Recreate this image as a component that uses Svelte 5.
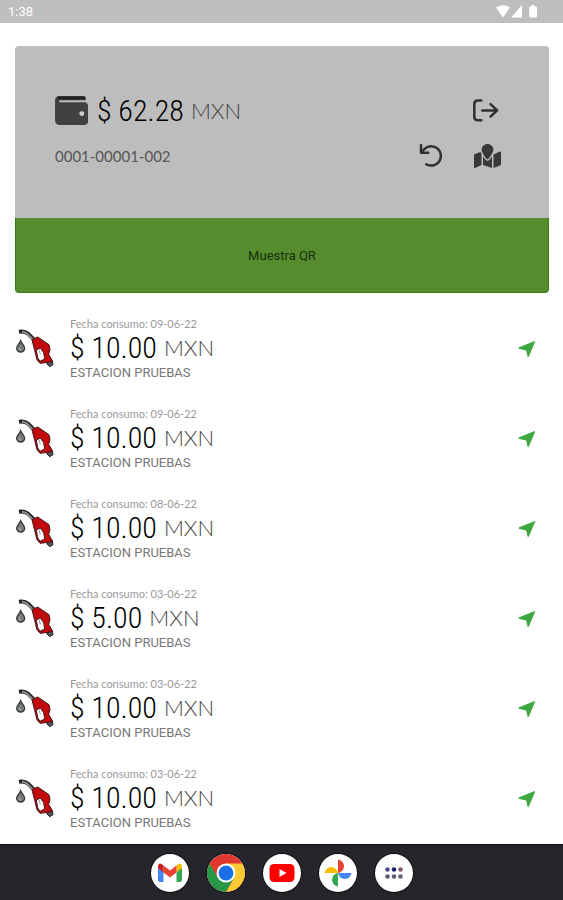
<script>
  const movements = [
    { date: '09-06-22', amount: '10.00' },
    { date: '09-06-22', amount: '10.00' },
    { date: '08-06-22', amount: '10.00' },
    { date: '03-06-22', amount: '5.00' },
    { date: '03-06-22', amount: '10.00' },
    { date: '03-06-22', amount: '10.00' }
  ];
</script>

<div class="screen">
  <header class="status">
    <span>1:38</span>
    <svg width="42" height="14" viewBox="0 0 42 14" fill="#fff" aria-hidden="true">
      <path d="M0 2.6Q7 -2.2 14 2.6L7 12.4Z" />
      <path d="M26 0V12.4H15Z" />
      <path d="M34 1.4h1.6V0h3v1.4h1.6a.8.8 0 0 1 .8.8v9.4a.8.8 0 0 1-.8.8h-6.2a.8.8 0 0 1-.8-.8V2.2a.8.8 0 0 1 .8-.8Z" />
    </svg>
  </header>

  <main>
    <section class="card">
      <div class="summary">
        <div class="line">
          <svg class="wallet" width="33" height="29" viewBox="0 32 512 448" aria-hidden="true">
            <path fill="#414141" d="M461.2 128H80c-8.84 0-16-7.16-16-16s7.16-16 16-16h384c8.84 0 16-7.16 16-16 0-26.51-21.49-48-48-48H64C28.65 32 0 60.65 0 96v320c0 35.35 28.65 64 64 64h397.2c28.02 0 50.8-21.53 50.8-48V176c0-26.47-22.78-48-50.8-48zM416 336c-17.67 0-32-14.33-32-32s14.33-32 32-32 32 14.33 32 32-14.33 32-32 32z" />
            <path fill="none" stroke="#222" stroke-width="44" stroke-linecap="round" d="M64 62H452" />
            <circle cx="416" cy="304" r="38" fill="#d0d0d0" />
          </svg>
          <p class="money">$ 62.28 <span>MXN</span></p>
          <button class="tool" aria-label="Salir">
            <svg width="30" height="24" viewBox="0 0 30 24" fill="none" stroke="#303030" stroke-width="2.5" stroke-linecap="round" stroke-linejoin="round">
              <path d="M8.3 1.6H4.8Q1.3 1.6 1.3 5.4V17.4Q1.3 21.2 4.8 21.2H8.3M9.3 11.4H24M17.5 5.2L24.2 11.4L17.5 17.6" />
            </svg>
          </button>
        </div>
        <div class="line">
          <p class="account">0001-00001-002</p>
          <button class="tool" aria-label="Actualizar">
            <svg width="24" height="24" viewBox="0 0 24 24" fill="none" stroke="#303030" stroke-width="2.5" stroke-linecap="round" stroke-linejoin="round">
              <path d="M2 1.2V8.8H9.2" />
              <path d="M2.8 8L5.6 4.8A9.7 9.7 0 1 1 7.2 20.2" />
            </svg>
          </button>
          <button class="tool" aria-label="Mapa">
            <svg width="27" height="24" viewBox="0 0 576 512">
              <path fill="#383838" d="M288 0c-69.59 0-126 56.41-126 126 0 56.26 82.35 158.8 113.9 196.02 6.39 7.54 17.82 7.54 24.2 0C331.65 284.8 414 182.26 414 126 414 56.41 357.59 0 288 0zM20.12 215.95A32.006 32.006 0 0 0 0 245.66v250.32c0 11.32 11.43 19.06 21.94 14.86L160 448V214.92c-8.84-15.98-16.07-31.54-21.25-46.42L20.12 215.95zM288 359.67c-14.07 0-27.38-6.18-36.51-16.96-19.66-23.2-40.57-49.62-59.49-76.72v182l192 64V266c-18.92 27.09-39.82 53.52-59.49 76.72-9.13 10.77-22.44 16.95-36.51 16.95zm266.06-198.51L416 224v288l139.88-55.95A31.996 31.996 0 0 0 576 426.34V176.02c0-11.32-11.43-19.06-21.94-14.86z" />
            </svg>
          </button>
        </div>
      </div>
      <button class="qr">Muestra QR</button>
    </section>

    <ul>
      {#each movements as m}
        <li>
          <svg class="pump" width="40" height="42" viewBox="45 65 120 126" aria-hidden="true">
            <path d="M57 76Q74 73 84 82L101 99" fill="none" stroke="#222" stroke-width="12" />
            <path d="M66 76Q76 76 82 83L99 100" fill="none" stroke="#8d9292" stroke-width="6" />
            <path d="M62 103C66 113 74 117 74 126A12 11 0 0 1 50 126C50 117 58 113 62 103Z" fill="#777b7b" stroke="#383838" stroke-width="4" />
            <path d="M57 125Q58 131 63 132" fill="none" stroke="#c4c7c7" stroke-width="3" />
            <path d="M141 161L157 164L159 175L149 181L141 173Z" fill="#555" stroke="#222" stroke-width="3" />
            <path d="M96 100L113 92L147 115L150 130L146 144L158 165L144 168L120 171L111 160L104 132Z" fill="#c00a0c" stroke="#471315" stroke-width="3" stroke-linejoin="round" />
            <path d="M109 131L121 125L131 139L134 158L120 165L113 154Z" fill="#fff" stroke="#45191a" stroke-width="3" stroke-linejoin="round" />
            <path d="M117 130L121 144" stroke="#999" stroke-width="3" />
          </svg>
          <div class="detail">
            <p class="date">Fecha consumo: {m.date}</p>
            <p class="money">$ {m.amount} <span>MXN</span></p>
            <p class="station">ESTACION PRUEBAS</p>
          </div>
          <button class="go" aria-label="Ver ubicación">
            <svg width="18" height="18" viewBox="0 0 18 18">
              <path fill="#3ca83f" d="M16.2 1.2Q17.4.8 17 2L11 16.2Q10.3 17.6 9.4 16.3L8.6 12Q8.5 10.5 7.2 10.2L1.4 9Q-.2 8.2 1.2 7.2Z" />
            </svg>
          </button>
        </li>
      {/each}
    </ul>
  </main>

  <nav>
    <a href="#gmail" aria-label="Gmail">
      <svg viewBox="0 0 38 38">
        <path d="M7 12V26Q7 28 9 28H12.5V17Z" fill="#4285f4" />
        <path d="M25.5 17V28H29Q31 28 31 26V12Z" fill="#34a853" />
        <path d="M25.5 11.5V18.5L31 14V12Q30.5 8.5 27.5 10Z" fill="#fbbc04" />
        <path d="M12.5 18.5V11.5L19 16.5L25.5 11.5V18.5L19 23.5Z" fill="#ea4335" />
        <path d="M7 14L12.5 18.5V11.5L10.5 10Q7.5 8.5 7 12Z" fill="#c5221f" />
      </svg>
    </a>
    <a href="#chrome" aria-label="Chrome">
      <svg viewBox="0 0 38 38">
        <circle cx="19" cy="19" r="19" fill="#e0382c" />
        <path d="M10.8 23.7L2.5 9.5A19 19 0 0 0 19 38L27.2 23.7Z" fill="#279847" />
        <path d="M19 9.5H35.5A19 19 0 0 1 19 38L27.2 23.7Z" fill="#fcc934" />
        <circle cx="19" cy="19" r="9.5" fill="#fff" />
        <circle cx="19" cy="19" r="7.4" fill="#1a6ee8" />
      </svg>
    </a>
    <a href="#youtube" aria-label="YouTube">
      <svg viewBox="0 0 38 38">
        <rect x="6.5" y="10" width="25" height="18" rx="4.5" fill="#f00" />
        <path d="M16.5 15L23.5 19L16.5 23Z" fill="#fff" />
      </svg>
    </a>
    <a href="#fotos" aria-label="Fotos">
      <svg viewBox="0 0 38 38">
        <path d="M19 5.5A6.8 6.8 0 0 1 19 19Z" fill="#ea4335" />
        <path d="M32.5 19A6.8 6.8 0 0 1 19 19Z" fill="#4285f4" />
        <path d="M19 32.5A6.8 6.8 0 0 1 19 19Z" fill="#34a853" />
        <path d="M5.5 19A6.8 6.8 0 0 1 19 19Z" fill="#fbbc04" />
      </svg>
    </a>
    <a href="#apps" aria-label="Aplicaciones">
      <svg viewBox="0 0 38 38">
        <circle cx="12.5" cy="15.5" r="2.3" fill="#484b8c" />
        <circle cx="19" cy="15.5" r="2.3" fill="#25236f" />
        <circle cx="25.5" cy="15.5" r="2.3" fill="#8a5770" />
        <circle cx="12.5" cy="22.5" r="2.3" fill="#5d5b73" />
        <circle cx="19" cy="22.5" r="2.3" fill="#5d5b77" />
        <circle cx="25.5" cy="22.5" r="2.3" fill="#65627a" />
      </svg>
    </a>
  </nav>
</div>

<style>
  :global(body) { margin: 0; background: #fff; }
  .screen {
    display: flex;
    flex-direction: column;
    min-height: 100vh;
    font-family: Roboto, "Liberation Sans", sans-serif;
  }
  p, ul { margin: 0; padding: 0; }
  svg { display: block; flex: none; }
  button {
    display: flex;
    align-items: center;
    justify-content: center;
    border: 0;
    padding: 0;
    background: none;
    font-family: inherit;
    cursor: pointer;
  }
  .status {
    display: flex;
    align-items: center;
    justify-content: space-between;
    height: 23px;
    padding: 0 25px 0 8px;
    background: #bebebe;
    color: #fff;
    font-size: 13px;
  }
  main { flex: 1; padding: 23px 14px 0 15px; }
  .card { border-radius: 4px; overflow: hidden; background: #bdbdbd; }
  .summary { padding: 42px 33px 40px 40px; }
  .line { display: flex; align-items: center; height: 45px; }
  .wallet { margin-right: 9px; }
  .money {
    display: flex;
    flex: 1;
    align-items: center;
    gap: 7px;
    font-family: "Roboto Condensed", Roboto, sans-serif;
    font-size: 30px;
    font-weight: 300;
    line-height: 34px;
    color: #000;
    white-space: nowrap;
  }
  .money span {
    font-family: Lato, sans-serif;
    font-size: 22px;
    font-weight: 300;
    color: #444;
  }
  .account { flex: 1; font-family: Lato, sans-serif; font-size: 15px; line-height: 20px; color: #555; }
  .tool { width: 57px; height: 45px; }
  .qr {
    width: 100%;
    height: 75px;
    background: #568c2d;
    border: solid #2f8218;
    border-width: 0 1px 1px;
    border-radius: 0 0 4px 4px;
    color: #17300c;
    font-size: 13px;
  }
  ul { list-style: none; padding-top: 11px; }
  li { display: flex; align-items: center; height: 90px; }
  .pump { margin-right: 15px; }
  .detail { flex: 1; }
  .date {
    font-family: Lato, sans-serif;
    font-size: 11px;
    line-height: 14px;
    color: #999;
  }
  .station { font-size: 13px; line-height: 16px; color: #777; }
  .go { width: 44px; height: 44px; }
  nav {
    display: flex;
    align-items: center;
    justify-content: center;
    gap: 18px;
    box-sizing: border-box;
    height: 56px;
    border-top: 1px solid #0d0d0f;
    background: #25262b;
  }
  nav a {
    width: 38px;
    height: 38px;
    border-radius: 50%;
    overflow: hidden;
    background: #fff;
    box-shadow: 0 0 0 1px #111;
  }
</style>
